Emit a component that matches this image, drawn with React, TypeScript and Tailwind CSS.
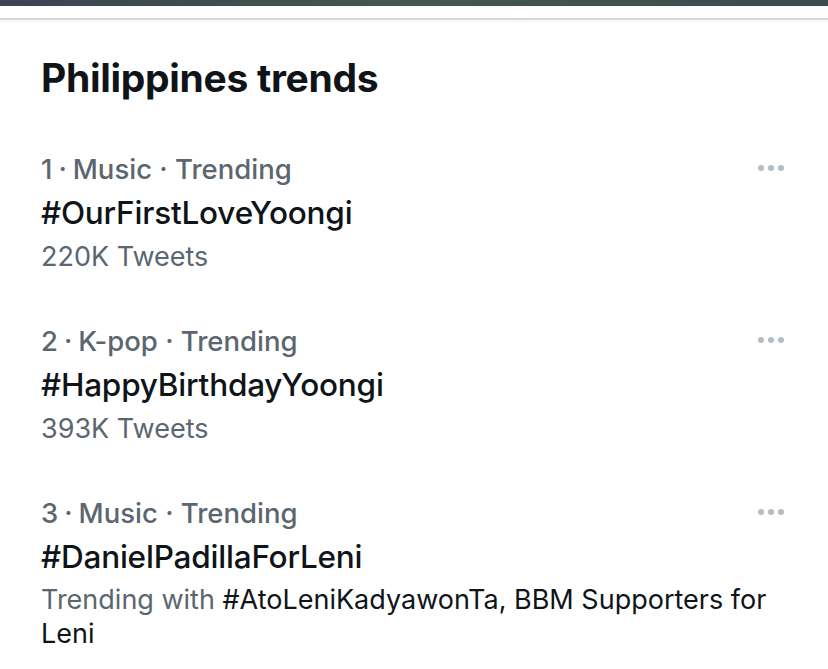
const trends = [
  { rank: 1, category: 'Music', name: '#OurFirstLoveYoongi', count: '220K Tweets' },
  { rank: 2, category: 'K-pop', name: '#HappyBirthdayYoongi', count: '393K Tweets' },
  {
    rank: 3,
    category: 'Music',
    name: '#DanielPadillaForLeni',
    with: '#AtoLeniKadyawonTa, BBM Supporters for Leni',
  },
];

function Dots() {
  return (
    <svg width="28" height="8" viewBox="0 0 28 8" aria-hidden="true">
      <circle cx="4" cy="4" r="3" fill="#b4bcc4" />
      <circle cx="14" cy="4" r="3" fill="#b4bcc4" />
      <circle cx="24" cy="4" r="3" fill="#b4bcc4" />
    </svg>
  );
}

export default function App() {
  return (
    <div className="w-[828px] h-[669px] overflow-hidden bg-white font-['Inter',sans-serif]">
      <div className="h-[6px] bg-gradient-to-r from-[#3a4452] via-[#46564c] to-[#3d4a50]" />
      <div className="h-[12px]" />
      <div className="h-[2px] bg-[#d6d6d6]" />
      <div className="h-[1px] bg-white" />
      <div className="h-[1px] bg-[#f2f2f2]" />

      <div className="px-[41px] pt-[36px]">
        <h2 className="text-[39px] leading-[40px] font-bold tracking-[-0.3px] text-[#0f1419]">
          Philippines trends
        </h2>

        <div className="mt-[49px] flex flex-col gap-[40px]">
          {trends.map((t) => (
            <div key={t.rank}>
              <div className="flex items-center justify-between">
                <div className="text-[27.5px] leading-[44px] font-medium text-[#5b6670]">
                  {t.rank}
                  <span className="mx-[6px]">·</span>
                  {t.category} · Trending
                </div>
                <div className="mr-[2px] -mt-[2px]">
                  <Dots />
                </div>
              </div>
              <div className="text-[31.5px] leading-[44px] font-medium tracking-[-0.2px] text-[#0f1419]">
                {t.name}
              </div>
              {t.count ? (
                <div className="text-[27px] leading-[44px] text-[#5b6670]">{t.count}</div>
              ) : (
                <div className="w-[745px] text-[27px] leading-[34px] mt-[4px] text-[#0f1419]">
                  <span className="text-[#5b6670]">Trending with </span>
                  {t.with}
                </div>
              )}
            </div>
          ))}
        </div>
      </div>
    </div>
  );
}
